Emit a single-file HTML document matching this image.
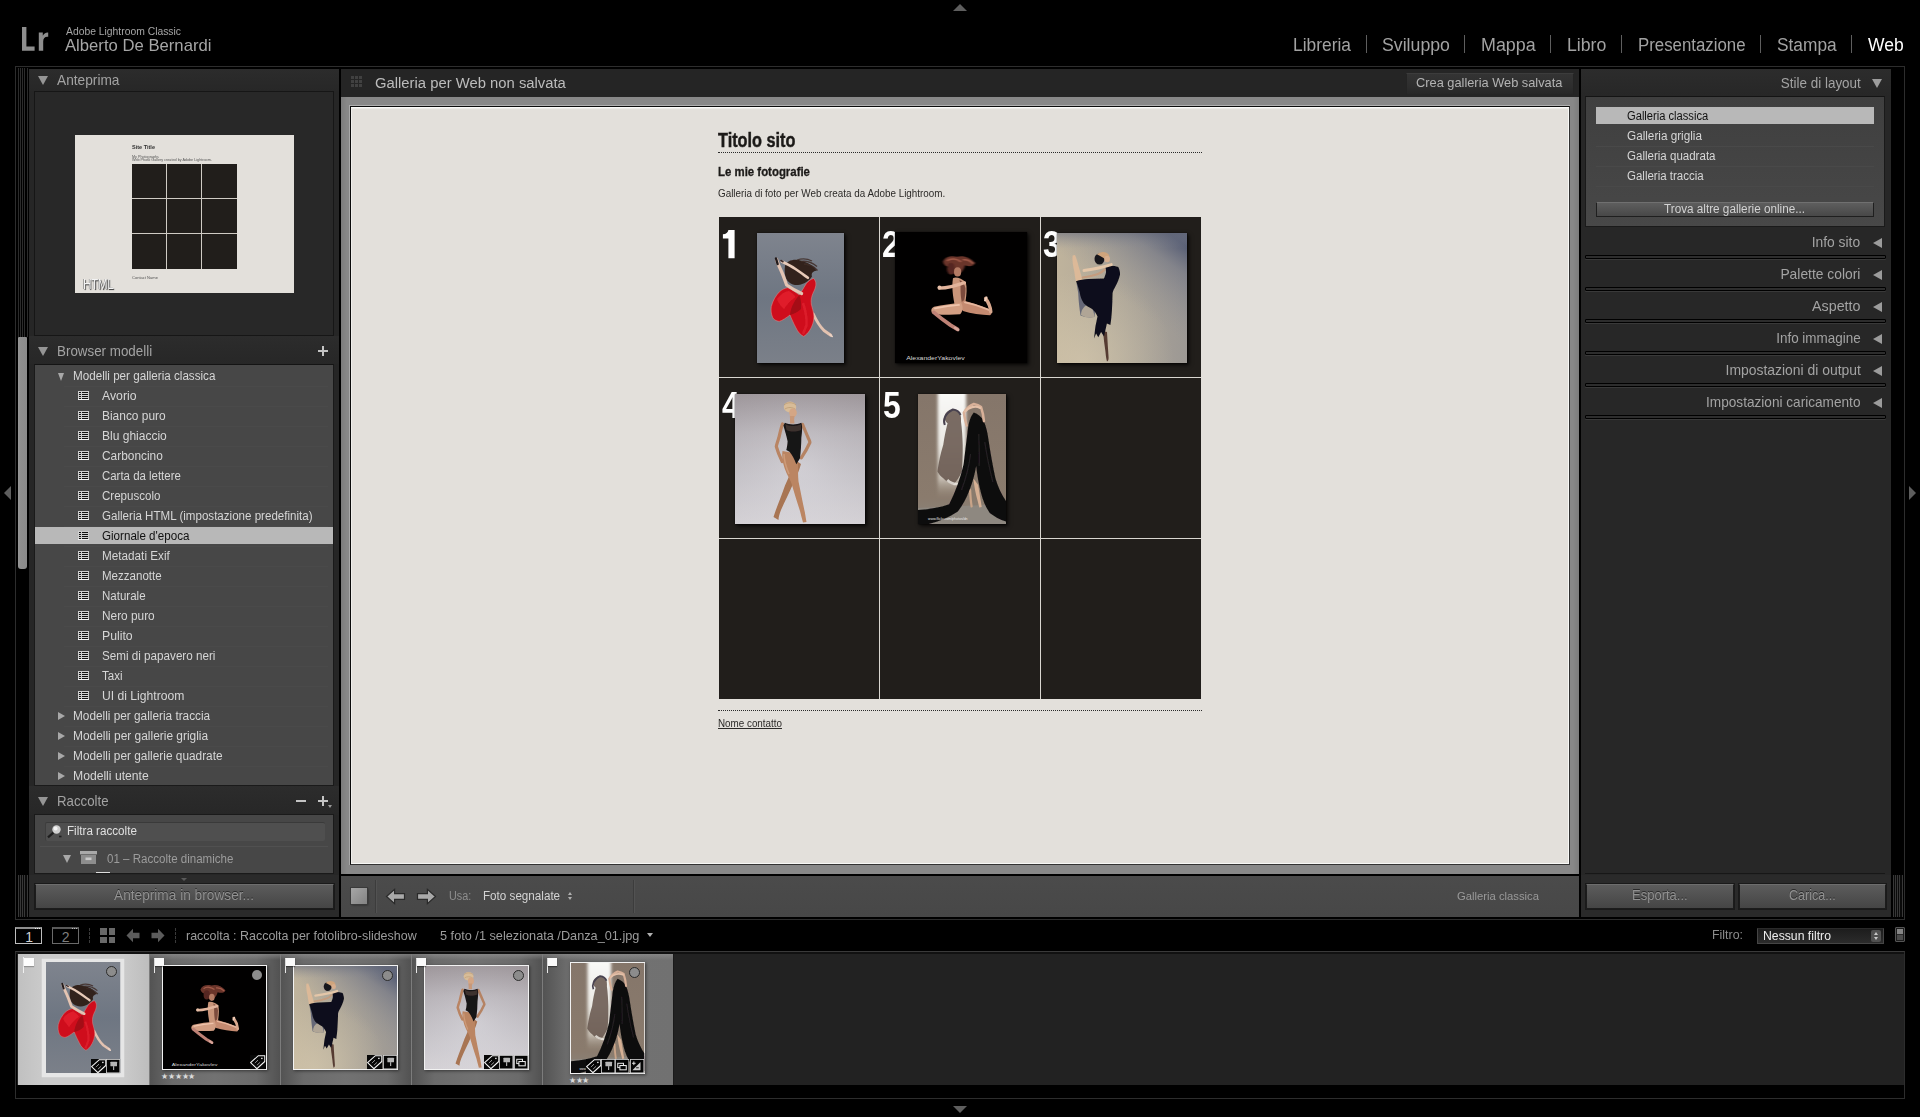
<!DOCTYPE html>
<html>
<head>
<meta charset="utf-8">
<title>Lightroom Classic - Web</title>
<style>
*{box-sizing:border-box;margin:0;padding:0}
html,body{width:1920px;height:1117px;overflow:hidden;background:#000}
body{position:relative;font-family:"Liberation Sans",sans-serif;color:#c8c8c8;font-size:12px}
.a{position:absolute}
.t{position:absolute;white-space:nowrap;line-height:1;transform-origin:0 50%}
.tr{position:absolute;white-space:nowrap;line-height:1;transform-origin:100% 50%;text-align:right}
.td{position:absolute;width:0;height:0;border-style:solid;border-color:transparent}
.row{position:absolute;left:0;width:300px;height:20px}
.sep{position:absolute;height:1px;background:#4c4c4c}
.ic{position:absolute;width:11px;height:9px}
svg{position:absolute;overflow:visible}
</style>
</head>
<body>
<svg width="0" height="0" style="left:0;top:0">
<defs>
<linearGradient id="g1" x1="0" y1="0" x2="0" y2="1"><stop offset="0" stop-color="#7f848e"/><stop offset=".5" stop-color="#6e7682"/><stop offset="1" stop-color="#7b8089"/></linearGradient>
<linearGradient id="g3" x1="0" y1="0" x2="1" y2="0"><stop offset="0" stop-color="#bfb39c"/><stop offset=".45" stop-color="#b0a899"/><stop offset="1" stop-color="#9c9894"/></linearGradient><radialGradient id="g3c" cx=".2" cy="1" r=".7"><stop offset="0" stop-color="#d8cbb0" stop-opacity=".6"/><stop offset="1" stop-color="#dccfb2" stop-opacity="0"/></radialGradient>
<linearGradient id="g3b" x1=".85" y1="0" x2=".5" y2=".5"><stop offset="0" stop-color="#4e5670" stop-opacity=".9"/><stop offset=".3" stop-color="#666c80" stop-opacity=".5"/><stop offset="1" stop-color="#8a8c94" stop-opacity="0"/></linearGradient><linearGradient id="g3d" x1="0" y1="0" x2="0" y2="1"><stop offset="0" stop-color="#6a6e7c" stop-opacity=".55"/><stop offset=".12" stop-color="#8a8c94" stop-opacity="0"/><stop offset="1" stop-color="#8a8c94" stop-opacity="0"/></linearGradient>
<linearGradient id="g4" x1="0" y1="0" x2="0" y2="1"><stop offset="0" stop-color="#a29b9f"/><stop offset=".3" stop-color="#c0bcc1"/><stop offset=".65" stop-color="#d1cfd4"/><stop offset="1" stop-color="#e5e3e7"/></linearGradient>
<radialGradient id="g4b" cx=".5" cy=".55" r=".7"><stop offset="0" stop-color="#d8d6dc" stop-opacity=".3"/><stop offset="1" stop-color="#8e878c" stop-opacity=".2"/></radialGradient>
<linearGradient id="g5l" x1="0" y1="0" x2="0" y2="1"><stop offset="0" stop-color="#fafaf8" stop-opacity="1"/><stop offset=".5" stop-color="#eeede8" stop-opacity=".97"/><stop offset=".82" stop-color="#d6d0c6" stop-opacity=".8"/><stop offset="1" stop-color="#a09484" stop-opacity="0"/></linearGradient>
<linearGradient id="g5" x1="0" y1="0" x2="0" y2="1"><stop offset="0" stop-color="#85766a"/><stop offset=".8" stop-color="#8a7b6d"/><stop offset="1" stop-color="#8a847c"/></linearGradient>
<filter id="bl1" x="-20%" y="-20%" width="140%" height="140%"><feGaussianBlur stdDeviation="0.8"/></filter>
<filter id="bl2" x="-20%" y="-20%" width="140%" height="140%"><feGaussianBlur stdDeviation="1.6"/></filter>
<filter id="bl05" x="-20%" y="-20%" width="140%" height="140%"><feGaussianBlur stdDeviation="0.65"/></filter>
</defs>
<symbol id="p1" viewBox="0 0 87 130" preserveAspectRatio="none">
<rect width="87" height="130" fill="url(#g1)"/>
<g filter="url(#bl05)">
<path d="M28 33C30 27 38 25.500 45 28C51 29.500 57 33 59.500 37.500C56 38.500 54 40 55 43.500C52 48 47 51.500 41 52C35 52.500 30 49 28.500 44C27.500 40 27.500 36 28 33Z" fill="#33241f"/>
<path d="M44 28.500C50 27.500 55 29.500 60 33.500M47 31C52 31 57 33.500 60.500 37.500M40 27C46 25 51 26 55 28" stroke="#3e2c26" stroke-width="1.300" fill="none" opacity=".85"/>
<path d="M56.300 81C59 87 62.500 93 67 97.500L73.800 102.300" stroke="#e3c2b0" stroke-width="2.900" fill="none" stroke-linecap="round" stroke-linejoin="round"/>
<path d="M73 101.500l2.200 2" stroke="#ecd4c6" stroke-width="1.600" stroke-linecap="round"/>
<path d="M56.600 45.400C60 49 59 53 57.500 57C55 62 53.500 66 54.500 72C56 78 57.800 82 56.500 88C55 95 51 101 46.600 103.400C43 101.500 41 99 39 95C36.500 90 34.500 86 33 82C29 85 25.500 87.500 22.200 88.400C19 88 16.500 86.500 15.800 84.800C14 81 13.800 77 14.300 73.400C16 67 19 62.500 22.200 59C25 56.500 28 55 30.800 54.700C35 56.500 39 59.500 42.300 61.900C45 58 47 54 49.400 50.400C51.500 48 54 46 56.600 45.400Z" fill="#cf0f1e" stroke="#e68a86" stroke-width=".5"/>
<path d="M33 82C33.500 76 36 69 42.300 61.900C44 66 44.500 71 44 76C41 79 37 81 33 82Z" fill="#9e0814" opacity=".9"/>
<path d="M20 66C24 61 28 58.500 32 58C35 60 37 62 38.500 64C34 67 30 71 27 76C24 73 21.500 70 20 66Z" fill="#e62330" opacity=".75"/>
<path d="M46 70C48 76 50 84 49.500 92C48 96 47 99 46 101" stroke="#e82836" stroke-width="2.400" fill="none" opacity=".55"/>
<path d="M19.500 26.500C20.500 30 22.500 34 24.500 38.500C26.500 43 28 47.500 29.600 52C34 55 39 58 44.600 60.500" stroke="#e4c4b2" stroke-width="3.200" fill="none" stroke-linecap="round" stroke-linejoin="round"/>
<path d="M24.800 28.500C29 30.500 34 33 38.500 36C43 39 47 42 50.900 44.800" stroke="#e8cab8" stroke-width="2.600" fill="none" stroke-linecap="round"/>
<path d="M19 25.500l1.600 5.500" stroke="#241a1e" stroke-width="2.400" stroke-linecap="round"/>
<path d="M24 27.500l2 1.200" stroke="#3a2a2a" stroke-width="1.600" stroke-linecap="round"/>
</g>
</symbol>
<symbol id="p2" viewBox="0 0 132 132" preserveAspectRatio="none">
<rect width="132" height="132" fill="#010000"/>
<g filter="url(#bl1)">
<path d="M48 30C50 25 56 23.500 62 25C68 23 75 25.500 80 31C79 35 74 35 70 33.500C69 38 66 42 62 42.500C57 42 55 39 54.500 35.500C51 35 48.500 33 48 30Z" fill="#6a342b"/>
<path d="M52 29C56 26 62 27 66 30M68 28C72 27.500 76 29.500 78.500 32" stroke="#a35c4a" stroke-width="1.600" fill="none"/>
<ellipse cx="56" cy="37" rx="4" ry="6" fill="#552820"/>
</g>
<g filter="url(#bl05)">
<ellipse cx="62.600" cy="40.200" rx="3.600" ry="4.600" fill="#b37a64"/>
<path d="M58 46.500C61 45 66.500 46.500 70.800 50.600C72.200 56 71.600 63 70.600 69.500C72 73 71 77 67 79C62 80 59.500 76 59.200 71C58 64 56.500 55 58 46.500Z" fill="#c9957a"/>
<path d="M64.500 48C68 50 70 53 70.500 57C70.500 63 69.500 69 68 74C66 70 65.500 62 65.500 56C65.500 53 65 50 64.500 48Z" fill="#6e4032" opacity=".85"/>
<path d="M69.500 51.200C65 52.500 60.500 54 56.300 55C52 56 48 56.500 44.300 56.600" stroke="#e2b49c" stroke-width="3.200" fill="none" stroke-linecap="round"/>
<circle cx="44.500" cy="56" r="2" fill="#e8c0a8"/>
<path d="M68 69C75 70.500 85 74 93.600 77.500C97 79.500 97 83 95 83.800C86 83.500 76 82 68 79.500C65.500 76 66 71.500 68 69Z" fill="#c48a70"/>
<path d="M70 71C78 72.500 87 75.500 94 78.500" stroke="#e6b79e" stroke-width="1.800" fill="none" stroke-linecap="round"/>
<path d="M95.800 80.500C95.500 76 93.500 71 90.600 66.800" stroke="#d9a88e" stroke-width="3.400" fill="none" stroke-linecap="round"/>
<path d="M91.500 66l-1.500 3" stroke="#f0d0bc" stroke-width="2" stroke-linecap="round"/>
<path d="M66 71.500C57 72 47 73.500 39 75.300C35.500 77 35.500 81 38.500 82.500C47 83.500 57 83.500 65 83C68 80 68.500 75 66 71.500Z" fill="#d29e83"/>
<path d="M64 73.500C56 74 47 75.500 40 77" stroke="#efc4ac" stroke-width="1.800" fill="none" stroke-linecap="round"/>
<path d="M38.800 81C44 85.500 50 90 55.500 93.800L62.600 98" stroke="#bf8276" stroke-width="3.800" fill="none" stroke-linecap="round" stroke-linejoin="round"/>
<path d="M60 96.500l3.200 2.200" stroke="#d8a79c" stroke-width="2.400" stroke-linecap="round"/>
</g>
<text x="11.200" y="128.600" font-family="Liberation Sans, sans-serif" font-size="5.400" fill="#d8d8d8" textLength="58.500" lengthAdjust="spacingAndGlyphs">AlexanderYakovlev</text>
</symbol>
<symbol id="p3" viewBox="0 0 130 130" preserveAspectRatio="none">
<rect width="130" height="130" fill="url(#g3)"/>
<rect width="130" height="130" fill="url(#g3c)"/>
<rect width="130" height="130" fill="url(#g3b)"/><rect width="130" height="130" fill="url(#g3d)"/>
<g filter="url(#bl05)">
<path d="M19.500 50C25 55 31 60 36 64.500C38 71 38.500 78 37.500 84C33 85 28 84.500 23.500 82.500C22.500 76 21.500 68 21.200 60Z" fill="#565b70" opacity=".85"/>
<path d="M24 82C24 78 26 74 30 72C34 72 36.500 76 37.500 84C33 85 27.500 84.500 24 82Z" fill="#bdb29c" opacity=".85"/>
<path d="M15.600 22.500C15 27 16 33 17.200 38C17.800 42 18.200 45 19 48.500L25.500 47.600C24.500 43 23 38 21.500 33C20.500 29 19.500 25 18 22Z" fill="#dcb998"/>
<path d="M46 98C46.500 105 47.500 112 48.500 119C48.800 123 49.300 126 50 128.500C51.500 128 51.800 126 51.500 123C51 116 50.500 108 50 99Z" fill="#553b32"/>
<path d="M48.400 33.500C52 32.500 57 32.600 61.300 34C62.500 36.500 63.200 39 63 41.800C62 46 60.500 49.500 58.500 53.300C57 56 56 58 55.600 60C55.500 66 55.200 72 54.900 77.700C54.600 83 54 88 53.400 92L49.900 90.500L47 103.400L44.100 99.100L41.300 104.200L39.100 100.600L37 105.600L38.400 93.400L40.500 83.400C39 80 37.500 78 35.500 76.200C32 74.500 29 72.500 26.900 70.500C24.500 67 23.200 63 22.600 59L20.500 51.900L19 48.300C23 47 27 46.400 31.200 46.100L47 45.400C48 43 48.800 41 49.100 39Z" fill="#11111b"/>
<path d="M27 37.500C32 36.800 37 36 41.500 35C46 34 50.500 32.800 54.300 31.600" stroke="#e4c6a8" stroke-width="2.900" fill="none" stroke-linecap="round"/>
<path d="M25.800 44.500C30 44 35 43 39.500 41.500C43 40.300 46 38.500 47.500 36.500" stroke="#c59c7e" stroke-width="2.200" fill="none" stroke-linecap="round"/>
<ellipse cx="42.500" cy="26" rx="5" ry="5.500" fill="#17141d"/>
<path d="M40 21.500C43 18 49.500 18 52 22C52.500 24 51 26 48.500 26.500C46 24.500 43 22.500 40 21.500Z" fill="#cfa47c"/>
<ellipse cx="50.200" cy="26" rx="2.800" ry="3.200" fill="#d7ae8e"/>
</g>
</symbol>
<symbol id="p4" viewBox="0 0 130 130" preserveAspectRatio="none">
<rect width="130" height="130" fill="url(#g4)"/>
<rect width="130" height="130" fill="url(#g4b)"/>
<g filter="url(#bl05)">
<ellipse cx="55" cy="13" rx="6.200" ry="5.400" fill="#d8bc98"/>
<path d="M49 11C52 8 58 8 61 11M50 15C53 13 57 13 60 15" stroke="#b89870" stroke-width="1" fill="none" opacity=".7"/>
<ellipse cx="58" cy="18.800" rx="3.800" ry="4.600" fill="#d4a685"/>
<path d="M54.800 22C55 25 55.200 27 55 29.500L59.500 29.500C59 27 59 24.500 59.500 22Z" fill="#c89878"/>
<path d="M47.500 30C46 34 45 39 43.800 44C42.500 48 41.600 50.500 41.300 52.500C42.500 57 44.500 62 47.200 67.500" stroke="#b98463" stroke-width="3.200" fill="none" stroke-linecap="round" stroke-linejoin="round"/>
<path d="M67.500 30.500C69.500 35 71.500 40 73.500 44.500C74.500 46.500 75 47.500 74.900 48.500C72.500 54 69.500 59 66.300 63.800" stroke="#b58364" stroke-width="3.200" fill="none" stroke-linecap="round" stroke-linejoin="round"/>
<path d="M60 66C57.500 75 53.500 84 50 91.500C47 100 43.500 109 40.500 117L38.500 123L43.500 126C43.500 123 44.500 120 46 116C50 107 54.500 98 58 90C61 84 64 77 66 70Z" fill="#a87453"/>
<path d="M47.500 57C46.500 63 48 71 51.500 79C54 84 55.800 87 56.500 89.500C59 98 62 108 65 117L66.500 123L68 128.500L71.500 128C71 125 70.500 122 69.800 118C67.500 108 65.500 97 63.500 87.500C63 82 63 76 63 70.500L57 58.700Z" fill="#bb8562"/><path d="M49 60C49 66 51 73 54 80" stroke="#d4a483" stroke-width="1.600" fill="none" opacity=".7"/>
<path d="M49.900 28.700C54.500 31 61.500 31 66.300 28.700C67.200 31 67.200 34 67 37C66.800 40 66.500 42.500 66.300 44.400C66.200 51 65.800 58 64.900 64.500L61.300 70.200C59.500 65.500 57.500 61 54.500 57.800L51.300 56C52 53.500 52.500 50.500 52.600 47.300C51.500 42 50 37 48.400 31.500Z" fill="#181315"/>
<path d="M50.300 30.200C55 32.500 61 32.500 66 30.200L66.200 36C61 38 55.500 38 51.500 36Z" fill="#3d302e"/>
</g>
</symbol>
<symbol id="p5" viewBox="0 0 87 130" preserveAspectRatio="none">
<rect width="87" height="130" fill="url(#g5)"/>
<path d="M0 114L87 110L87 130L0 130Z" fill="#8e8880"/>
<rect x="19.500" y="-4" width="28" height="108" fill="url(#g5l)" filter="url(#bl2)"/>
<g filter="url(#bl05)">
<path d="M29.200 29.200C27.500 28 26.800 26.500 26.700 25.800C25.500 23 26.500 20 28.300 18.300C30.500 16 33 15.500 35 15.800C38 16 40.500 17.500 41.700 19.200C42.500 22 42.700 25 42.500 27.500C43.500 35 44 43 44.200 50.800C44.300 60 44 69 43.300 77.500C41 83 38 87.500 35 90.800C31 89.500 27.500 87 25 84.200C22.500 82.500 20.500 80 19.200 77.500C20.500 68 22.500 59 25 50.800C26 43 27.500 36 29.200 29.200Z" fill="#65564d" opacity=".86"/>
<path d="M26.500 31C24.500 26 26.500 19.500 34.500 15.500C38 16 41 18 42 21" stroke="#4a4350" stroke-width="2" fill="none"/>
<path d="M29 86C32 89 36 90.500 40 90" stroke="#f0ece6" stroke-width="2.500" fill="none" opacity=".8"/>
</g>
<g filter="url(#bl05)">
<path d="M54.800 84.500C55.500 92 57 100 59 107L60.600 113.500L63 113C62 106 60.500 98 59.500 91Z" fill="#d6b094"/>
<path d="M51.500 96C51.800 102 52.300 108 53 112.500" stroke="#c9a488" stroke-width="2.200" fill="none" stroke-linecap="round"/>
<path d="M55.200 18.600C59 20 63 23 65.200 27.200C67.500 33 68.800 39 69.500 44.400C71.500 58 74 72 76.600 84.500C79 93 83 101 87 107L87 127.500C81 125.500 75.500 122.500 70.900 118.900C67 113 64 106 62.300 98.900C60 90 58.500 81 57.500 72C56 81 53.800 89 50.900 96C48 104 44 111.500 39.400 117.500C31 123 21 127.500 10.700 130L0 130L0 116C11 115.500 22 113.500 30.800 110.300C37 98 42 84 45.100 70.200C46.500 58 48 46 49.400 34.400C50.500 27 52.500 21.500 55.200 18.600Z" fill="#0e0c0e"/>
<path d="M60 40C60.500 52 61 62 60.500 72M66 48C68 62 71 76 74 88M52 60C50.500 72 47.500 84 43 96" stroke="#2a2628" stroke-width="1.200" fill="none" opacity=".8"/>
<path d="M48 31.500C46.800 27 45.800 22.500 45.300 18.600C48 14.500 51.500 11.500 55.200 10C58 10.500 60.500 11.500 62.300 12.900C63.800 17.500 64.800 22.500 65.200 27.200" stroke="#d8b098" stroke-width="2.500" fill="none" stroke-linecap="round" stroke-linejoin="round"/>
<path d="M46.500 17.500C50 13 57 11.500 61.500 14" stroke="#e4c0a8" stroke-width="2.100" fill="none" stroke-linecap="round"/>
</g>
<text x="10" y="126" font-family="Liberation Sans, sans-serif" font-size="3.200" fill="#e8e8e8" textLength="39" lengthAdjust="spacingAndGlyphs">www.flickr.com/photos/dn</text>
</symbol>
<symbol id="b_tag" viewBox="0 0 14 14" preserveAspectRatio="none"><rect width="14" height="14" fill="#080808"/><path d="M0.500 7.500L7.500 0.700H13.300V6.300L6.200 13.400Z" fill="#050505" stroke="#f4f4f4" stroke-width="1"/><path d="M4.400 7.900L7.500 4.700M6.200 10L9.500 6.700" stroke="#e8e8e8" stroke-width=".8" stroke-dasharray="1 .5" fill="none"/><rect x="10" y="2.700" width="1.300" height="1.300" fill="#f0f0f0"/></symbol>
<symbol id="b_kw" viewBox="0 0 14 14"><rect width="14" height="14" fill="#050505"/><rect x=".4" y=".4" width="13.200" height="13.200" fill="none" stroke="#d6d6d6" stroke-width=".8"/><rect x="4.300" y="2.600" width="6.500" height="4.500" rx=".6" fill="#b6b6b6"/><rect x="7" y="7" width="1" height="3.800" fill="#c8c8c8"/></symbol>
<symbol id="b_coll" viewBox="0 0 14 14"><rect width="14" height="14" fill="#050505"/><rect x=".4" y=".4" width="13.200" height="13.200" fill="none" stroke="#d6d6d6" stroke-width=".8"/><rect x="2.700" y="4.200" width="5.600" height="4.200" fill="none" stroke="#e8e8e8" stroke-width="1"/><rect x="4.800" y="6.400" width="6.200" height="4.200" fill="#050505" stroke="#f0f0f0" stroke-width="1"/></symbol>
<symbol id="b_dev" viewBox="0 0 14 14"><rect width="14" height="14" fill="#050505"/><rect x=".4" y=".4" width="13.200" height="13.200" fill="none" stroke="#d6d6d6" stroke-width=".8"/><path d="M2.300 10.900L10.300 2.900V10.900Z" fill="#cdcdcd"/><path d="M2 4.200H5.500M3.750 2.400V6" stroke="#f0f0f0" stroke-width=".9"/><path d="M6 8.600H8.600" stroke="#050505" stroke-width=".9"/></symbol>
</svg>
<div class="td" style="left:953px;top:3.500px;border-width:0 7.500px 7.500px 7.500px;border-bottom-color:#5e5e5e"></div>
<div class="td" style="left:952.500px;top:1106px;border-width:7.500px 7.500px 0 7.500px;border-top-color:#5e5e5e"></div>
<div class="td" style="left:3.800px;top:485.500px;border-width:7.200px 7.500px 7.200px 0;border-right-color:#5e5e5e"></div>
<div class="td" style="left:1908.700px;top:485.800px;border-width:7.200px 0 7.200px 7.500px;border-left-color:#5e5e5e"></div>
<svg style="left:22px;top:27px" width="27" height="24" viewBox="0 0 27 24"><path d="M0 0h4.4v19.4h8.2v4.4H0zM16.8 5.6h4v3.2c1-2.2 2.8-3.6 5.4-3.4v4.4c-3.2-.4-5 1.400-5 4.600v9.400h-4.400z" fill="#8e8e8e"/></svg>
<div class="t" style="top:25.97px;font-size:11.5px;color:#a6a6a6;left:65.50px;transform:scaleX(0.8995);">Adobe Lightroom Classic</div>
<div class="t" style="top:38.05px;font-size:16.6px;color:#a6a6a6;left:64.80px;transform:scaleX(1.0049);">Alberto De Bernardi</div>
<div class="t" style="top:36.09px;font-size:18.8px;color:#a2a2a2;left:1292.70px;transform:scaleX(0.9251);">Libreria</div>
<div class="t" style="top:36.09px;font-size:18.8px;color:#a2a2a2;left:1382.00px;transform:scaleX(0.9429);">Sviluppo</div>
<div class="t" style="top:36.09px;font-size:18.8px;color:#a2a2a2;left:1481.00px;transform:scaleX(0.9516);">Mappa</div>
<div class="t" style="top:36.09px;font-size:18.8px;color:#a2a2a2;left:1567.30px;transform:scaleX(0.9425);">Libro</div>
<div class="t" style="top:36.09px;font-size:18.8px;color:#a2a2a2;left:1638.00px;transform:scaleX(0.8961);">Presentazione</div>
<div class="t" style="top:36.09px;font-size:18.8px;color:#a2a2a2;left:1777.00px;transform:scaleX(0.9214);">Stampa</div>
<div class="t" style="top:36.09px;font-size:18.8px;color:#ffffff;left:1868.00px;transform:scaleX(0.9317);">Web</div>
<div class="a" style="left:1366px;top:35px;width:1px;height:18px;background:#5e5e5e"></div>
<div class="a" style="left:1464px;top:35px;width:1px;height:18px;background:#5e5e5e"></div>
<div class="a" style="left:1550px;top:35px;width:1px;height:18px;background:#5e5e5e"></div>
<div class="a" style="left:1621px;top:35px;width:1px;height:18px;background:#5e5e5e"></div>
<div class="a" style="left:1760px;top:35px;width:1px;height:18px;background:#5e5e5e"></div>
<div class="a" style="left:1851px;top:35px;width:1px;height:18px;background:#5e5e5e"></div>
<div class="a" style="left:15px;top:66px;width:1890px;height:854px;border:1px solid #2d2d2d"></div>
<div class="a" style="left:18px;top:68px;width:10px;height:269px;background:repeating-linear-gradient(90deg,#2c2c2c 0,#2c2c2c 1px,#000 1px,#000 2.150px)"></div>
<div class="a" style="left:29px;top:69px;width:310px;height:848px;background:#262626"></div>
<div class="a" style="left:18px;top:337px;width:9px;height:231.500px;border-radius:1px 1px 3px 3px;background:linear-gradient(90deg,#979797,#8e8e8e 30%,#8a8a8a)"></div>
<div class="a" style="left:18px;top:875px;width:10px;height:42px;background:repeating-linear-gradient(90deg,#383838 0,#383838 1px,#0a0a0a 1px,#0a0a0a 2.150px)"></div>
<div class="a" style="left:29px;top:69px;width:310px;height:22px;background:linear-gradient(#2c2c2c,#272727)"></div>
<div class="td" style="left:37.5px;top:75.5px;border-width:9.5px 5px 0 5px;border-top-color:#959595"></div>
<div class="t" style="top:72.74px;font-size:14.6px;color:#a3a3a3;left:57.30px;transform:scaleX(0.9393);">Anteprima</div>
<div class="a" style="left:34px;top:91px;width:300px;height:245px;background:#282828;border:1px solid #161616"></div>
<div class="a" style="left:75px;top:135px;width:219px;height:158px;background:#e3e0db"></div>
<div class="a" style="left:132px;top:164px;width:105px;height:105px;background:#211e1b"></div>
<div class="a" style="left:165.5px;top:164px;width:1px;height:105px;background:#cfcbc4"></div>
<div class="a" style="left:200.5px;top:164px;width:1px;height:105px;background:#cfcbc4"></div>
<div class="a" style="left:132px;top:198px;width:105px;height:1px;background:#cfcbc4"></div>
<div class="a" style="left:132px;top:233px;width:105px;height:1px;background:#cfcbc4"></div>
<div class="t" style="top:144.05px;font-size:6.2px;color:#333;font-weight:bold;left:132.00px;transform:scaleX(0.8940);">Site Title</div>
<div class="t" style="top:154.74px;font-size:4.2px;color:#555;left:132.00px;transform:scaleX(0.8828);">My Photographs</div>
<div class="t" style="top:158.24px;font-size:4.2px;color:#555;left:132.00px;transform:scaleX(0.8885);">Web Photo Gallery created by Adobe Lightroom.</div>
<div class="t" style="top:275.58px;font-size:4.4px;color:#555;left:132.00px;transform:scaleX(0.9245);">Contact Name</div>
<div class="t" style="top:277.33px;font-size:14.5px;color:#f4f4f4;left:83.00px;transform:scaleX(0.8107);text-shadow:1px 1px 1px #333,-0.5px -0.5px 0 #666;letter-spacing:-0.5px;">HTML</div>
<div class="a" style="left:29px;top:336px;width:310px;height:28px;background:linear-gradient(#2c2c2c,#272727)"></div>
<div class="td" style="left:37.5px;top:346.5px;border-width:9.5px 5px 0 5px;border-top-color:#959595"></div>
<div class="t" style="top:343.74px;font-size:14.6px;color:#a3a3a3;left:57.30px;transform:scaleX(0.9167);">Browser modelli</div>
<div class="a" style="left:318px;top:350px;width:10px;height:2px;background:#c4c4c4"></div><div class="a" style="left:322px;top:346px;width:2px;height:10px;background:#c4c4c4"></div>
<div class="a" style="left:34px;top:364px;width:300px;height:422px;background:#474747;border:1px solid #1a1a1a;border-top-color:#141414"></div>
<div class="td" style="left:58px;top:372.5px;border-width:8px 3.8px 0 3.8px;border-top-color:#a8a8a8"></div>
<div class="t" style="top:369.84px;font-size:12px;color:#d6d6d6;left:73.40px;transform:scaleX(0.9705);">Modelli per galleria classica</div>
<div class="a" style="left:64px;top:386px;width:264px;height:1px;background:#4a4a4a"></div>
<svg style="left:78px;top:391px" width="11" height="10" viewBox="0 0 11 10" shape-rendering="crispEdges"><rect x="0" y="0" width="11" height="9" fill="#121212"/><path d="M0 .5h11M0 2.500h11M0 4.500h11M0 6.500h11M.5 0v9M10.500 0v9M3.500 0v9" stroke="#cfcfcf" stroke-width="1" fill="none"/><path d="M0 8.500h11" stroke="#f4f4f4" stroke-width="1"/></svg>
<div class="t" style="top:389.84px;font-size:12px;color:#d6d6d6;left:102.30px;transform:scaleX(1.0208);">Avorio</div>
<div class="a" style="left:64px;top:406px;width:264px;height:1px;background:#4a4a4a"></div>
<svg style="left:78px;top:411px" width="11" height="10" viewBox="0 0 11 10" shape-rendering="crispEdges"><rect x="0" y="0" width="11" height="9" fill="#121212"/><path d="M0 .5h11M0 2.500h11M0 4.500h11M0 6.500h11M.5 0v9M10.500 0v9M3.500 0v9" stroke="#cfcfcf" stroke-width="1" fill="none"/><path d="M0 8.500h11" stroke="#f4f4f4" stroke-width="1"/></svg>
<div class="t" style="top:409.84px;font-size:12px;color:#d6d6d6;left:102.30px;transform:scaleX(0.9946);">Bianco puro</div>
<div class="a" style="left:64px;top:426px;width:264px;height:1px;background:#4a4a4a"></div>
<svg style="left:78px;top:431px" width="11" height="10" viewBox="0 0 11 10" shape-rendering="crispEdges"><rect x="0" y="0" width="11" height="9" fill="#121212"/><path d="M0 .5h11M0 2.500h11M0 4.500h11M0 6.500h11M.5 0v9M10.500 0v9M3.500 0v9" stroke="#cfcfcf" stroke-width="1" fill="none"/><path d="M0 8.500h11" stroke="#f4f4f4" stroke-width="1"/></svg>
<div class="t" style="top:429.84px;font-size:12px;color:#d6d6d6;left:102.30px;transform:scaleX(1.0015);">Blu ghiaccio</div>
<div class="a" style="left:64px;top:446px;width:264px;height:1px;background:#4a4a4a"></div>
<svg style="left:78px;top:451px" width="11" height="10" viewBox="0 0 11 10" shape-rendering="crispEdges"><rect x="0" y="0" width="11" height="9" fill="#121212"/><path d="M0 .5h11M0 2.500h11M0 4.500h11M0 6.500h11M.5 0v9M10.500 0v9M3.500 0v9" stroke="#cfcfcf" stroke-width="1" fill="none"/><path d="M0 8.500h11" stroke="#f4f4f4" stroke-width="1"/></svg>
<div class="t" style="top:449.84px;font-size:12px;color:#d6d6d6;left:102.30px;transform:scaleX(0.9907);">Carboncino</div>
<div class="a" style="left:64px;top:466px;width:264px;height:1px;background:#4a4a4a"></div>
<svg style="left:78px;top:471px" width="11" height="10" viewBox="0 0 11 10" shape-rendering="crispEdges"><rect x="0" y="0" width="11" height="9" fill="#121212"/><path d="M0 .5h11M0 2.500h11M0 4.500h11M0 6.500h11M.5 0v9M10.500 0v9M3.500 0v9" stroke="#cfcfcf" stroke-width="1" fill="none"/><path d="M0 8.500h11" stroke="#f4f4f4" stroke-width="1"/></svg>
<div class="t" style="top:469.84px;font-size:12px;color:#d6d6d6;left:102.30px;transform:scaleX(0.9527);">Carta da lettere</div>
<div class="a" style="left:64px;top:486px;width:264px;height:1px;background:#4a4a4a"></div>
<svg style="left:78px;top:491px" width="11" height="10" viewBox="0 0 11 10" shape-rendering="crispEdges"><rect x="0" y="0" width="11" height="9" fill="#121212"/><path d="M0 .5h11M0 2.500h11M0 4.500h11M0 6.500h11M.5 0v9M10.500 0v9M3.500 0v9" stroke="#cfcfcf" stroke-width="1" fill="none"/><path d="M0 8.500h11" stroke="#f4f4f4" stroke-width="1"/></svg>
<div class="t" style="top:489.84px;font-size:12px;color:#d6d6d6;left:102.30px;transform:scaleX(0.9621);">Crepuscolo</div>
<div class="a" style="left:64px;top:506px;width:264px;height:1px;background:#4a4a4a"></div>
<svg style="left:78px;top:511px" width="11" height="10" viewBox="0 0 11 10" shape-rendering="crispEdges"><rect x="0" y="0" width="11" height="9" fill="#121212"/><path d="M0 .5h11M0 2.500h11M0 4.500h11M0 6.500h11M.5 0v9M10.500 0v9M3.500 0v9" stroke="#cfcfcf" stroke-width="1" fill="none"/><path d="M0 8.500h11" stroke="#f4f4f4" stroke-width="1"/></svg>
<div class="t" style="top:509.84px;font-size:12px;color:#d6d6d6;left:102.30px;transform:scaleX(0.9647);">Galleria HTML (impostazione predefinita)</div>
<div class="a" style="left:35px;top:527px;width:298px;height:17px;background:#b8b8b8"></div>
<div class="a" style="left:64px;top:526px;width:264px;height:1px;background:#4a4a4a"></div>
<svg style="left:78px;top:531px" width="11" height="10" viewBox="0 0 11 10" shape-rendering="crispEdges"><rect x="0" y="0" width="11" height="9" fill="#121212"/><path d="M0 .5h11M0 2.500h11M0 4.500h11M0 6.500h11M.5 0v9M10.500 0v9M3.500 0v9" stroke="#cfcfcf" stroke-width="1" fill="none"/><path d="M0 8.500h11" stroke="#f4f4f4" stroke-width="1"/></svg>
<div class="t" style="top:529.84px;font-size:12px;color:#111;left:102.30px;transform:scaleX(0.9673);">Giornale d'epoca</div>
<div class="a" style="left:64px;top:546px;width:264px;height:1px;background:#4a4a4a"></div>
<svg style="left:78px;top:551px" width="11" height="10" viewBox="0 0 11 10" shape-rendering="crispEdges"><rect x="0" y="0" width="11" height="9" fill="#121212"/><path d="M0 .5h11M0 2.500h11M0 4.500h11M0 6.500h11M.5 0v9M10.500 0v9M3.500 0v9" stroke="#cfcfcf" stroke-width="1" fill="none"/><path d="M0 8.500h11" stroke="#f4f4f4" stroke-width="1"/></svg>
<div class="t" style="top:549.84px;font-size:12px;color:#d6d6d6;left:102.30px;transform:scaleX(0.9775);">Metadati Exif</div>
<div class="a" style="left:64px;top:566px;width:264px;height:1px;background:#4a4a4a"></div>
<svg style="left:78px;top:571px" width="11" height="10" viewBox="0 0 11 10" shape-rendering="crispEdges"><rect x="0" y="0" width="11" height="9" fill="#121212"/><path d="M0 .5h11M0 2.500h11M0 4.500h11M0 6.500h11M.5 0v9M10.500 0v9M3.500 0v9" stroke="#cfcfcf" stroke-width="1" fill="none"/><path d="M0 8.500h11" stroke="#f4f4f4" stroke-width="1"/></svg>
<div class="t" style="top:569.84px;font-size:12px;color:#d6d6d6;left:102.30px;transform:scaleX(0.9624);">Mezzanotte</div>
<div class="a" style="left:64px;top:586px;width:264px;height:1px;background:#4a4a4a"></div>
<svg style="left:78px;top:591px" width="11" height="10" viewBox="0 0 11 10" shape-rendering="crispEdges"><rect x="0" y="0" width="11" height="9" fill="#121212"/><path d="M0 .5h11M0 2.500h11M0 4.500h11M0 6.500h11M.5 0v9M10.500 0v9M3.500 0v9" stroke="#cfcfcf" stroke-width="1" fill="none"/><path d="M0 8.500h11" stroke="#f4f4f4" stroke-width="1"/></svg>
<div class="t" style="top:589.84px;font-size:12px;color:#d6d6d6;left:102.30px;transform:scaleX(0.9612);">Naturale</div>
<div class="a" style="left:64px;top:606px;width:264px;height:1px;background:#4a4a4a"></div>
<svg style="left:78px;top:611px" width="11" height="10" viewBox="0 0 11 10" shape-rendering="crispEdges"><rect x="0" y="0" width="11" height="9" fill="#121212"/><path d="M0 .5h11M0 2.500h11M0 4.500h11M0 6.500h11M.5 0v9M10.500 0v9M3.500 0v9" stroke="#cfcfcf" stroke-width="1" fill="none"/><path d="M0 8.500h11" stroke="#f4f4f4" stroke-width="1"/></svg>
<div class="t" style="top:609.84px;font-size:12px;color:#d6d6d6;left:102.30px;transform:scaleX(0.9876);">Nero puro</div>
<div class="a" style="left:64px;top:626px;width:264px;height:1px;background:#4a4a4a"></div>
<svg style="left:78px;top:631px" width="11" height="10" viewBox="0 0 11 10" shape-rendering="crispEdges"><rect x="0" y="0" width="11" height="9" fill="#121212"/><path d="M0 .5h11M0 2.500h11M0 4.500h11M0 6.500h11M.5 0v9M10.500 0v9M3.500 0v9" stroke="#cfcfcf" stroke-width="1" fill="none"/><path d="M0 8.500h11" stroke="#f4f4f4" stroke-width="1"/></svg>
<div class="t" style="top:629.84px;font-size:12px;color:#d6d6d6;left:102.30px;transform:scaleX(1.0227);">Pulito</div>
<div class="a" style="left:64px;top:646px;width:264px;height:1px;background:#4a4a4a"></div>
<svg style="left:78px;top:651px" width="11" height="10" viewBox="0 0 11 10" shape-rendering="crispEdges"><rect x="0" y="0" width="11" height="9" fill="#121212"/><path d="M0 .5h11M0 2.500h11M0 4.500h11M0 6.500h11M.5 0v9M10.500 0v9M3.500 0v9" stroke="#cfcfcf" stroke-width="1" fill="none"/><path d="M0 8.500h11" stroke="#f4f4f4" stroke-width="1"/></svg>
<div class="t" style="top:649.84px;font-size:12px;color:#d6d6d6;left:102.30px;transform:scaleX(0.9715);">Semi di papavero neri</div>
<div class="a" style="left:64px;top:666px;width:264px;height:1px;background:#4a4a4a"></div>
<svg style="left:78px;top:671px" width="11" height="10" viewBox="0 0 11 10" shape-rendering="crispEdges"><rect x="0" y="0" width="11" height="9" fill="#121212"/><path d="M0 .5h11M0 2.500h11M0 4.500h11M0 6.500h11M.5 0v9M10.500 0v9M3.500 0v9" stroke="#cfcfcf" stroke-width="1" fill="none"/><path d="M0 8.500h11" stroke="#f4f4f4" stroke-width="1"/></svg>
<div class="t" style="top:669.84px;font-size:12px;color:#d6d6d6;left:102.30px;transform:scaleX(0.9606);">Taxi</div>
<div class="a" style="left:64px;top:686px;width:264px;height:1px;background:#4a4a4a"></div>
<svg style="left:78px;top:691px" width="11" height="10" viewBox="0 0 11 10" shape-rendering="crispEdges"><rect x="0" y="0" width="11" height="9" fill="#121212"/><path d="M0 .5h11M0 2.500h11M0 4.500h11M0 6.500h11M.5 0v9M10.500 0v9M3.500 0v9" stroke="#cfcfcf" stroke-width="1" fill="none"/><path d="M0 8.500h11" stroke="#f4f4f4" stroke-width="1"/></svg>
<div class="t" style="top:689.84px;font-size:12px;color:#d6d6d6;left:102.30px;transform:scaleX(1.0114);">UI di Lightroom</div>
<div class="a" style="left:64px;top:706px;width:264px;height:1px;background:#4a4a4a"></div>
<div class="td" style="left:58px;top:711.7px;border-width:4.300px 0 4.300px 7.500px;border-left-color:#a8a8a8"></div>
<div class="t" style="top:709.84px;font-size:12px;color:#d6d6d6;left:73.40px;transform:scaleX(0.9842);">Modelli per galleria traccia</div>
<div class="a" style="left:64px;top:726px;width:264px;height:1px;background:#4a4a4a"></div>
<div class="td" style="left:58px;top:731.7px;border-width:4.300px 0 4.300px 7.500px;border-left-color:#a8a8a8"></div>
<div class="t" style="top:729.84px;font-size:12px;color:#d6d6d6;left:73.40px;transform:scaleX(0.9929);">Modelli per gallerie griglia</div>
<div class="a" style="left:64px;top:746px;width:264px;height:1px;background:#4a4a4a"></div>
<div class="td" style="left:58px;top:751.7px;border-width:4.300px 0 4.300px 7.500px;border-left-color:#a8a8a8"></div>
<div class="t" style="top:749.84px;font-size:12px;color:#d6d6d6;left:73.40px;transform:scaleX(0.9879);">Modelli per gallerie quadrate</div>
<div class="a" style="left:64px;top:766px;width:264px;height:1px;background:#4a4a4a"></div>
<div class="td" style="left:58px;top:771.7px;border-width:4.300px 0 4.300px 7.500px;border-left-color:#a8a8a8"></div>
<div class="t" style="top:769.84px;font-size:12px;color:#d6d6d6;left:73.40px;transform:scaleX(1.0132);">Modelli utente</div>
<div class="a" style="left:29px;top:786px;width:310px;height:29px;background:linear-gradient(#2c2c2c,#272727)"></div>
<div class="td" style="left:37.5px;top:797.0px;border-width:9.5px 5px 0 5px;border-top-color:#959595"></div>
<div class="t" style="top:794.24px;font-size:14.6px;color:#a3a3a3;left:57.30px;transform:scaleX(0.9084);">Raccolte</div>
<div class="a" style="left:296px;top:800px;width:10px;height:2px;background:#c4c4c4"></div>
<div class="a" style="left:318px;top:800px;width:10px;height:2px;background:#c4c4c4"></div><div class="a" style="left:322px;top:796px;width:2px;height:10px;background:#c4c4c4"></div>
<div class="td" style="left:328px;top:805px;border-width:3px 2px 0 2px;border-top-color:#9a9a9a"></div>
<div class="a" style="left:34px;top:814px;width:300px;height:60px;background:#474747;border:1px solid #1a1a1a"></div>
<div class="a" style="left:45px;top:822px;width:280px;height:19px;background:#4f4f4f;border-top:1px solid #3a3a3a;border-left:1px solid #3e3e3e;border-radius:2px"></div>
<div class="a" style="left:40px;top:846px;width:288px;height:1px;background:#505050"></div>
<svg style="left:47px;top:824px" width="16" height="15" viewBox="0 0 16 15"><circle cx="9.5" cy="5.5" r="4.2" fill="#cfcfcf"/><circle cx="8.6" cy="4.6" r="2" fill="#f4f4f4"/><path d="M6.4 8.6L1 13.4" stroke="#1d1d1d" stroke-width="2.2"/><path d="M12 12.5h2.5" stroke="#1d1d1d" stroke-width="1.6"/></svg>
<div class="t" style="top:825.04px;font-size:12px;color:#e0e0e0;left:67.40px;transform:scaleX(0.9705);">Filtra raccolte</div>
<div class="td" style="left:63px;top:855px;border-width:8px 4px 0 4px;border-top-color:#a8a8a8"></div>
<svg style="left:80px;top:851px" width="17" height="13" viewBox="0 0 17 13"><rect x="0" y="0" width="17" height="3.400" fill="#a9a9a9"/><rect x="1" y="4" width="15" height="9" fill="#8d8d8d"/><rect x="5.5" y="6.5" width="6" height="2.600" fill="#c9c9c9"/></svg>
<div class="t" style="top:852.94px;font-size:12px;color:#9c9c9c;left:106.80px;transform:scaleX(0.9619);">01 – Raccolte dinamiche</div>
<div class="a" style="left:96px;top:872px;width:14px;height:1px;background:#ddd"></div>
<div class="a" style="left:29px;top:875px;width:310px;height:42px;background:#2a2a2a"></div>
<div class="td" style="left:181px;top:878px;border-width:3px 3px 0 3px;border-top-color:#5a5a5a"></div>
<div class="a" style="left:35px;top:884px;width:299px;height:25px;background:linear-gradient(#5c5c5c,#454545);border:1px solid #1c1c1c;border-top-color:#6d6d6d;box-shadow:0 0 0 1px #1a1a1a"></div>
<div class="t" style="top:887.94px;font-size:14.6px;color:#919191;left:114.20px;transform:scaleX(0.9377);text-shadow:0 -1px 0 #2a2a2a;">Anteprima in browser...</div>
<div class="a" style="left:341px;top:69px;width:1238px;height:28px;background:#252525"></div>
<svg style="left:351px;top:76px" width="11" height="11"><rect x="0" y="0" width="3" height="3" fill="#414141"/><rect x="4" y="0" width="3" height="3" fill="#414141"/><rect x="8" y="0" width="3" height="3" fill="#414141"/><rect x="0" y="4" width="3" height="3" fill="#414141"/><rect x="4" y="4" width="3" height="3" fill="#414141"/><rect x="8" y="4" width="3" height="3" fill="#414141"/><rect x="0" y="8" width="3" height="3" fill="#414141"/><rect x="4" y="8" width="3" height="3" fill="#414141"/><rect x="8" y="8" width="3" height="3" fill="#414141"/></svg>
<div class="t" style="top:74.83px;font-size:15.2px;color:#bcbcbc;left:375.30px;transform:scaleX(0.9758);">Galleria per Web non salvata</div>
<div class="a" style="left:1406px;top:73px;width:168px;height:22px;background:linear-gradient(#343434,#2e2e2e 60%,#272727);border:1px solid #242424;border-top-color:#3c3c3c;border-bottom-color:#252525"></div>
<div class="t" style="top:75.86px;font-size:13.4px;color:#b4b4b4;left:1416.30px;transform:scaleX(0.9564);">Crea galleria Web salvata</div>
<div class="a" style="left:341px;top:97px;width:1238px;height:777px;background:linear-gradient(90deg,#7c7c7c,#888 6px,#888 1232px,#7c7c7c)"></div>
<div class="a" style="left:349px;top:105px;width:1221px;height:760px;border-top:1px solid #b0b0b0;border-left:1px solid #a8a8a8"></div>
<div class="a" style="left:350px;top:106px;width:1220px;height:759px;background:#e3e0db;border:1px solid #333;border-top-color:#0c0c0c;border-left-color:#0c0c0c;box-shadow:inset 0 1px 0 #fbfbf9,inset 0 2px 0 #eeece8,inset -1px -1px 0 #f8f8f6,inset 1px 0 0 #f0efec"></div>
<div class="t" style="top:130.71px;font-size:19.6px;color:#1c1a18;font-weight:bold;left:718.30px;transform:scaleX(0.8309);-webkit-text-stroke:0.45px #1c1a18;">Titolo sito</div>
<div class="a" style="left:718px;top:152px;width:484px;height:0;border-top:1px dotted #2a2a2a"></div>
<div class="t" style="top:166.33px;font-size:12.6px;color:#1c1a18;font-weight:bold;left:718.30px;transform:scaleX(0.9063);-webkit-text-stroke:0.3px #1c1a18;">Le mie fotografie</div>
<div class="t" style="top:188.02px;font-size:11.2px;color:#2c2a28;left:718.30px;transform:scaleX(0.8812);">Galleria di foto per Web creata da Adobe Lightroom.</div>
<div class="a" style="left:719px;top:217px;width:482px;height:482px;background:#d9d6d0"></div>
<div class="a" style="left:719px;top:217px;width:160px;height:160px;background:#211e1b"></div>
<div class="a" style="left:880px;top:217px;width:160px;height:160px;background:#211e1b"></div>
<div class="a" style="left:1041px;top:217px;width:160px;height:160px;background:#211e1b"></div>
<div class="a" style="left:719px;top:378px;width:160px;height:160px;background:#211e1b"></div>
<div class="a" style="left:880px;top:378px;width:160px;height:160px;background:#211e1b"></div>
<div class="a" style="left:1041px;top:378px;width:160px;height:160px;background:#211e1b"></div>
<div class="a" style="left:719px;top:539px;width:160px;height:160px;background:#211e1b"></div>
<div class="a" style="left:880px;top:539px;width:160px;height:160px;background:#211e1b"></div>
<div class="a" style="left:1041px;top:539px;width:160px;height:160px;background:#211e1b"></div>
<div class="a" style="left:718px;top:710px;width:484px;height:0;border-top:1px dotted #2a2a2a"></div>
<div class="t" style="top:717.86px;font-size:10.8px;color:#2c2a28;left:718.00px;transform:scaleX(0.9112);text-decoration:underline;">Nome contatto</div>
<svg style="left:0;top:0" width="1" height="1"><path d="M728.400 230h6.200v28.300h-6.200v-19.900h-5.500v-4.100c3.200-.2 5-1.700 5.500-4.300z" fill="#fff"/></svg>
<div class="t" style="top:225.98px;font-size:37px;color:#ffffff;font-weight:bold;left:881.50px;transform:scaleX(0.8600);">2</div>
<div class="t" style="top:225.98px;font-size:37px;color:#ffffff;font-weight:bold;left:1043.30px;transform:scaleX(0.8600);">3</div>
<div class="t" style="top:386.98px;font-size:37px;color:#ffffff;font-weight:bold;left:721.50px;transform:scaleX(0.8600);">4</div>
<div class="t" style="top:386.98px;font-size:37px;color:#ffffff;font-weight:bold;left:882.70px;transform:scaleX(0.8600);">5</div>
<div class="a" style="left:757px;top:233px;width:87px;height:130px;box-shadow:0 0 1.500px 0.500px rgba(0,0,0,.9),2px 2px 4px rgba(0,0,0,.75)"><svg width="87" height="130" style="left:0;top:0"><use href="#p1" width="87" height="130"/></svg></div>
<div class="a" style="left:895px;top:232px;width:132px;height:131px;box-shadow:0 0 1.500px 0.500px rgba(0,0,0,.9),2px 2px 4px rgba(0,0,0,.75)"><svg width="132" height="131" style="left:0;top:0"><use href="#p2" width="132" height="131"/></svg></div>
<div class="a" style="left:1057px;top:233px;width:130px;height:130px;box-shadow:0 0 1.500px 0.500px rgba(0,0,0,.9),2px 2px 4px rgba(0,0,0,.75)"><svg width="130" height="130" style="left:0;top:0"><use href="#p3" width="130" height="130"/></svg></div>
<div class="a" style="left:735px;top:394px;width:130px;height:130px;box-shadow:0 0 1.500px 0.500px rgba(0,0,0,.9),2px 2px 4px rgba(0,0,0,.75)"><svg width="130" height="130" style="left:0;top:0"><use href="#p4" width="130" height="130"/></svg></div>
<div class="a" style="left:918px;top:394px;width:88px;height:130px;box-shadow:0 0 1.500px 0.500px rgba(0,0,0,.9),2px 2px 4px rgba(0,0,0,.75)"><svg width="88" height="130" style="left:0;top:0"><use href="#p5" width="88" height="130"/></svg></div>
<div class="a" style="left:341px;top:876px;width:1238px;height:41px;background:linear-gradient(#4b4b4b,#474747)"></div>
<div class="a" style="left:351px;top:888px;width:16px;height:16px;background:linear-gradient(135deg,#a6a6a6,#838383);box-shadow:0 0 0 1px #3a3a3a,1px 1px 2px #222"></div>
<div class="a" style="left:375px;top:880px;width:1px;height:33px;background:#3c3c3c"></div><div class="a" style="left:376px;top:880px;width:1px;height:33px;background:#525252"></div>
<svg style="left:385.5px;top:888.7px" width="19" height="15" viewBox="0 0 19 15"><path d="M0.5 7.5L8.6 0.4V4.700H18.500V10.300H8.600V14.600Z" fill="#a9a9a9" stroke="#2a2a2a" stroke-width="1.2"/></svg>
<svg style="left:416.8px;top:888.7px" width="19" height="15" viewBox="0 0 19 15"><path d="M18.500 7.500L10.400 0.400V4.700H0.500V10.300H10.400V14.600Z" fill="#a9a9a9" stroke="#2a2a2a" stroke-width="1.2"/></svg>
<div class="t" style="top:889.84px;font-size:12px;color:#8e8e8e;left:449.30px;transform:scaleX(0.8997);">Usa:</div>
<div class="t" style="top:889.84px;font-size:12px;color:#d4d4d4;left:483.20px;transform:scaleX(0.9712);">Foto segnalate</div>
<div class="td" style="left:568px;top:892px;border-width:0 2.500px 3px 2.500px;border-bottom-color:#b0b0b0"></div><div class="td" style="left:568px;top:897px;border-width:3px 2.500px 0 2.500px;border-top-color:#b0b0b0"></div>
<div class="a" style="left:633px;top:880px;width:1px;height:33px;background:#3c3c3c"></div><div class="a" style="left:634px;top:880px;width:1px;height:33px;background:#525252"></div>
<div class="t" style="top:890.18px;font-size:11.6px;color:#9a9a9a;left:1457.00px;transform:scaleX(0.9710);">Galleria classica</div>
<div class="a" style="left:1581px;top:69px;width:310px;height:848px;background:#272727"></div>
<div class="a" style="left:1581px;top:69px;width:310px;height:27px;background:linear-gradient(#2c2c2c,#272727)"></div>
<div class="tr" style="top:76.24px;font-size:14.6px;color:#a3a3a3;right:59.50px;transform:scaleX(0.9213);">Stile di layout</div>
<div class="td" style="left:1871.5px;top:79px;border-width:9.5px 5px 0 5px;border-top-color:#9c9c9c"></div>
<div class="a" style="left:1585px;top:96px;width:300px;height:131px;background:linear-gradient(#3f3f3f,#484848);border:1px solid #1a1a1a;border-top-color:#141414"></div>
<div class="a" style="left:1596px;top:107px;width:278px;height:17px;background:#b8b8b8"></div>
<div class="t" style="top:110.04px;font-size:12px;color:#111;left:1627.00px;transform:scaleX(0.9294);">Galleria classica</div>
<div class="t" style="top:130.04px;font-size:12px;color:#d6d6d6;left:1627.00px;transform:scaleX(0.9778);">Galleria griglia</div>
<div class="a" style="left:1596px;top:146px;width:278px;height:1px;background:#494949"></div>
<div class="t" style="top:150.04px;font-size:12px;color:#d6d6d6;left:1627.00px;transform:scaleX(0.9614);">Galleria quadrata</div>
<div class="a" style="left:1596px;top:166px;width:278px;height:1px;background:#494949"></div>
<div class="t" style="top:170.04px;font-size:12px;color:#d6d6d6;left:1627.00px;transform:scaleX(0.9584);">Galleria traccia</div>
<div class="a" style="left:1596px;top:186px;width:278px;height:1px;background:#494949"></div>
<div class="a" style="left:1596px;top:202px;width:278px;height:15px;background:linear-gradient(#5e5e5e,#484848);border:1px solid #1f1f1f;border-top-color:#707070"></div>
<div class="t" style="top:203.04px;font-size:12px;color:#d2d2d2;left:1664.30px;transform:scaleX(0.9772);">Trova altre gallerie online...</div>
<div class="tr" style="top:234.84px;font-size:14.6px;color:#a3a3a3;right:59.50px;transform:scaleX(0.9486);">Info sito</div>
<div class="td" style="left:1872.500px;top:237.5px;border-width:5px 9.500px 5px 0;border-right-color:#9c9c9c"></div>
<div class="a" style="left:1585px;top:255px;width:301px;height:4px;background:#2d2d2d;border:1px solid #000;border-radius:1px;box-shadow:0 1px 0 #393939"></div>
<div class="tr" style="top:266.84px;font-size:14.6px;color:#a3a3a3;right:59.50px;transform:scaleX(0.9479);">Palette colori</div>
<div class="td" style="left:1872.500px;top:269.5px;border-width:5px 9.500px 5px 0;border-right-color:#9c9c9c"></div>
<div class="a" style="left:1585px;top:287px;width:301px;height:4px;background:#2d2d2d;border:1px solid #000;border-radius:1px;box-shadow:0 1px 0 #393939"></div>
<div class="tr" style="top:298.84px;font-size:14.6px;color:#a3a3a3;right:59.50px;transform:scaleX(0.9796);">Aspetto</div>
<div class="td" style="left:1872.500px;top:301.5px;border-width:5px 9.500px 5px 0;border-right-color:#9c9c9c"></div>
<div class="a" style="left:1585px;top:319px;width:301px;height:4px;background:#2d2d2d;border:1px solid #000;border-radius:1px;box-shadow:0 1px 0 #393939"></div>
<div class="tr" style="top:330.84px;font-size:14.6px;color:#a3a3a3;right:59.50px;transform:scaleX(0.9215);">Info immagine</div>
<div class="td" style="left:1872.500px;top:333.5px;border-width:5px 9.500px 5px 0;border-right-color:#9c9c9c"></div>
<div class="a" style="left:1585px;top:351px;width:301px;height:4px;background:#2d2d2d;border:1px solid #000;border-radius:1px;box-shadow:0 1px 0 #393939"></div>
<div class="tr" style="top:362.84px;font-size:14.6px;color:#a3a3a3;right:59.50px;transform:scaleX(0.9540);">Impostazioni di output</div>
<div class="td" style="left:1872.500px;top:365.5px;border-width:5px 9.500px 5px 0;border-right-color:#9c9c9c"></div>
<div class="a" style="left:1585px;top:383px;width:301px;height:4px;background:#2d2d2d;border:1px solid #000;border-radius:1px;box-shadow:0 1px 0 #393939"></div>
<div class="tr" style="top:394.84px;font-size:14.6px;color:#a3a3a3;right:59.50px;transform:scaleX(0.9333);">Impostazioni caricamento</div>
<div class="td" style="left:1872.500px;top:397.5px;border-width:5px 9.500px 5px 0;border-right-color:#9c9c9c"></div>
<div class="a" style="left:1585px;top:415px;width:301px;height:4px;background:#2d2d2d;border:1px solid #000;border-radius:1px;box-shadow:0 1px 0 #393939"></div>
<div class="a" style="left:1585px;top:873px;width:300px;height:1px;background:#171717"></div>
<div class="a" style="left:1581px;top:875px;width:310px;height:42px;background:#2a2a2a"></div>
<div class="a" style="left:1586px;top:884px;width:148px;height:25px;background:linear-gradient(#5c5c5c,#454545);border:1px solid #1c1c1c;border-top-color:#6d6d6d;box-shadow:0 0 0 1px #1a1a1a"></div>
<div class="t" style="top:887.94px;font-size:14.6px;color:#919191;left:1632.00px;transform:scaleX(0.8914);text-shadow:0 -1px 0 #2a2a2a;">Esporta...</div>
<div class="a" style="left:1739px;top:884px;width:147px;height:25px;background:linear-gradient(#5c5c5c,#454545);border:1px solid #1c1c1c;border-top-color:#6d6d6d;box-shadow:0 0 0 1px #1a1a1a"></div>
<div class="t" style="top:887.94px;font-size:14.6px;color:#919191;left:1788.70px;transform:scaleX(0.8591);text-shadow:0 -1px 0 #2a2a2a;">Carica...</div>
<div class="a" style="left:1891px;top:67px;width:13px;height:852px;background:#000"></div>
<div class="a" style="left:1893px;top:875px;width:10px;height:42px;background:repeating-linear-gradient(90deg,#383838 0,#383838 1px,#0a0a0a 1px,#0a0a0a 2.150px)"></div>
<div class="a" style="left:15px;top:927px;width:27px;height:17px;border:1px solid #bdbdbd;border-top:2px solid #8e8e8e"></div><div class="a" style="left:35px;top:927.500px;width:5px;height:1px;background:repeating-linear-gradient(90deg,#eee 0,#eee 1px,transparent 1px,transparent 2px)"></div>
<div class="t" style="top:929.95px;font-size:14px;color:#d2d2d2;left:25.20px;transform:scaleX(1.0000);">1</div>
<div class="a" style="left:52px;top:927px;width:27px;height:17px;border:1px solid #6a6a6a;border-top:2px solid #585858"></div><div class="a" style="left:72px;top:927.500px;width:5px;height:1px;background:repeating-linear-gradient(90deg,#bbb 0,#bbb 1px,transparent 1px,transparent 2px)"></div>
<div class="t" style="top:929.95px;font-size:14px;color:#7e7e7e;left:61.80px;transform:scaleX(1.0000);">2</div>
<div class="a" style="left:89px;top:928px;width:0;height:15px;border-left:1px dashed #3a3a3a"></div>
<div class="a" style="left:100.0px;top:928.0px;width:6.5px;height:6.5px;background:#696969"></div>
<div class="a" style="left:108.5px;top:928.0px;width:6.5px;height:6.5px;background:#696969"></div>
<div class="a" style="left:100.0px;top:936.5px;width:6.5px;height:6.5px;background:#696969"></div>
<div class="a" style="left:108.5px;top:936.5px;width:6.5px;height:6.5px;background:#696969"></div>
<svg style="left:126px;top:928px" width="14" height="15" viewBox="0 0 14 15"><path d="M0.500 7.500L7 0.800V4.800H13.500V10.200H7V14.200Z" fill="#5c5c5c"/></svg>
<svg style="left:151px;top:928px" width="14" height="15" viewBox="0 0 14 15"><path d="M13.500 7.500L7 0.800V4.800H0.500V10.200H7V14.200Z" fill="#5c5c5c"/></svg>
<div class="a" style="left:175px;top:928px;width:0;height:15px;border-left:1px dashed #3a3a3a"></div>
<div class="t" style="top:929.26px;font-size:13.4px;color:#9c9c9c;left:186.20px;transform:scaleX(0.9306);">raccolta : Raccolta per fotolibro-slideshow</div>
<div class="t" style="top:929.26px;font-size:13.4px;color:#9c9c9c;left:440.00px;transform:scaleX(0.9496);">5 foto /1 selezionata /Danza_01.jpg</div>
<div class="td" style="left:647px;top:933px;border-width:4.5px 3.700px 0 3.700px;border-top-color:#b0b0b0"></div>
<div class="t" style="top:928.83px;font-size:12.6px;color:#8c8c8c;left:1712.20px;transform:scaleX(0.9841);">Filtro:</div>
<div class="a" style="left:1757px;top:928px;width:127px;height:16px;background:linear-gradient(#1d1d1d,#2b2b2b);border:1px solid #454545;border-top-color:#2a2a2a"></div>
<div class="t" style="top:929.63px;font-size:12.6px;color:#ededed;left:1763.20px;transform:scaleX(0.9711);">Nessun filtro</div>
<div class="a" style="left:1871px;top:930px;width:10px;height:12px;background:#505050;border-radius:2px"></div>
<div class="td" style="left:1873.500px;top:932px;border-width:0 2.500px 3px 2.500px;border-bottom-color:#c8c8c8"></div><div class="td" style="left:1873.500px;top:937px;border-width:3px 2.500px 0 2.500px;border-top-color:#c8c8c8"></div>
<div class="a" style="left:1894.5px;top:927px;width:10px;height:15px;background:linear-gradient(#858585 0,#858585 45%,#2a2a2a 45%,#2a2a2a 52%,#4c4c4c 52%);border:1px solid #555;box-shadow:inset 0 0 0 1px #1c1c1c;border-radius:1px"></div>
<div class="a" style="left:15px;top:951px;width:1890px;height:148px;border:1px solid #2d2d2d;border-top-color:#3a3a3a"></div>
<div class="a" style="left:17px;top:952px;width:1887px;height:133px;background:#222"></div>
<div class="a" style="left:16px;top:952px;width:1888px;height:2px;background:#111"></div>
<div class="a" style="left:18px;top:954px;width:131px;height:131px;background:linear-gradient(90deg,#c0c0c0,#cbcbcb 20%,#cbcbcb 80%,#bdbdbd)"></div>
<div class="a" style="left:42px;top:959px;width:82.0px;height:117.5px;background:#e6e6e6;box-shadow:0 0 1px #f4f4f4"></div>
<svg style="left:46px;top:962px" width="74.5" height="111"><use href="#p1" width="74.5" height="111"/></svg>
<div class="a" style="left:22.5px;top:957px;width:1px;height:16px;background:#f0f0f0"></div><div class="a" style="left:23.5px;top:957.5px;width:10px;height:8.5px;background:#fdfdfd;box-shadow:0 1px 1px rgba(0,0,0,.25)"></div>
<div class="a" style="left:105.7px;top:965.5px;width:11px;height:11px;border-radius:6px;background:#8c8c8c;border:1.2px solid #2c2c2c"></div>
<svg style="left:90.6px;top:1058.5px" width="15.6" height="14.3"><use href="#b_tag" width="15.6" height="14.3"/></svg>
<svg style="left:106.2px;top:1058.5px" width="14.3" height="14.3"><use href="#b_kw" width="14.3" height="14.3"/></svg>
<div class="a" style="left:149px;top:954px;width:131px;height:131px;background:linear-gradient(rgba(150,150,150,.55),rgba(120,120,120,0) 6px),linear-gradient(90deg,#525252,#6b6b6b 18%,#727272 50%,#6b6b6b 82%,#525252)"></div>
<div class="a" style="left:149px;top:954px;width:1px;height:131px;background:#7c7c7c"></div>
<div class="a" style="left:162px;top:965px;width:105px;height:105px;background:#f2f2f2;box-shadow:1px 1px 3px rgba(0,0,0,.5)"></div>
<svg style="left:163px;top:966px" width="103" height="103"><use href="#p2" width="103" height="103"/></svg>
<div class="a" style="left:154px;top:958px;width:1px;height:15px;background:#e8e8e8"></div><div class="a" style="left:155px;top:958px;width:9px;height:7.5px;background:#fafafa;box-shadow:0 1px 1px rgba(0,0,0,.4)"></div>
<div class="a" style="left:251.7px;top:970px;width:10px;height:10px;border-radius:5px;background:#8c8c8c"></div>
<svg style="left:250.4px;top:1054.5px" width="15.6" height="14.3"><use href="#b_tag" width="15.6" height="14.3"/></svg>
<div class="t" style="left:161.4px;top:1073.3px;font-size:7.6px;color:#dadada">★</div>
<div class="t" style="left:168.1px;top:1073.3px;font-size:7.6px;color:#dadada">★</div>
<div class="t" style="left:174.8px;top:1073.3px;font-size:7.6px;color:#dadada">★</div>
<div class="t" style="left:181.5px;top:1073.3px;font-size:7.6px;color:#dadada">★</div>
<div class="t" style="left:188.2px;top:1073.3px;font-size:7.6px;color:#dadada">★</div>
<div class="a" style="left:280px;top:954px;width:131px;height:131px;background:linear-gradient(rgba(150,150,150,.55),rgba(120,120,120,0) 6px),linear-gradient(90deg,#525252,#6b6b6b 18%,#727272 50%,#6b6b6b 82%,#525252)"></div>
<div class="a" style="left:280px;top:954px;width:1px;height:131px;background:#7c7c7c"></div>
<div class="a" style="left:293px;top:965px;width:105px;height:105px;background:#f2f2f2;box-shadow:1px 1px 3px rgba(0,0,0,.5)"></div>
<svg style="left:294px;top:966px" width="103" height="103"><use href="#p3" width="103" height="103"/></svg>
<div class="a" style="left:285px;top:958px;width:1px;height:15px;background:#e8e8e8"></div><div class="a" style="left:286px;top:958px;width:9px;height:7.5px;background:#fafafa;box-shadow:0 1px 1px rgba(0,0,0,.4)"></div>
<div class="a" style="left:382.2px;top:969.5px;width:11px;height:11px;border-radius:6px;background:#8c8c8c;border:1.2px solid #2c2c2c"></div>
<svg style="left:367.1px;top:1054.5px" width="15.6" height="14.3"><use href="#b_tag" width="15.6" height="14.3"/></svg>
<svg style="left:382.7px;top:1054.5px" width="14.3" height="14.3"><use href="#b_kw" width="14.3" height="14.3"/></svg>
<div class="a" style="left:411px;top:954px;width:131px;height:131px;background:linear-gradient(rgba(150,150,150,.55),rgba(120,120,120,0) 6px),linear-gradient(90deg,#525252,#6b6b6b 18%,#727272 50%,#6b6b6b 82%,#525252)"></div>
<div class="a" style="left:411px;top:954px;width:1px;height:131px;background:#7c7c7c"></div>
<div class="a" style="left:424px;top:965px;width:105px;height:105px;background:#f2f2f2;box-shadow:1px 1px 3px rgba(0,0,0,.5)"></div>
<svg style="left:425px;top:966px" width="103" height="103"><use href="#p4" width="103" height="103"/></svg>
<div class="a" style="left:416px;top:958px;width:1px;height:15px;background:#e8e8e8"></div><div class="a" style="left:417px;top:958px;width:9px;height:7.5px;background:#fafafa;box-shadow:0 1px 1px rgba(0,0,0,.4)"></div>
<div class="a" style="left:513.2px;top:969.5px;width:11px;height:11px;border-radius:6px;background:#8c8c8c;border:1.2px solid #2c2c2c"></div>
<svg style="left:483.8px;top:1054.5px" width="15.6" height="14.3"><use href="#b_tag" width="15.6" height="14.3"/></svg>
<svg style="left:499.4px;top:1054.5px" width="14.3" height="14.3"><use href="#b_kw" width="14.3" height="14.3"/></svg>
<svg style="left:513.7px;top:1054.5px" width="14.3" height="14.3"><use href="#b_coll" width="14.3" height="14.3"/></svg>
<div class="a" style="left:542px;top:954px;width:131px;height:131px;background:linear-gradient(rgba(150,150,150,.55),rgba(120,120,120,0) 6px),linear-gradient(90deg,#525252,#6b6b6b 18%,#727272 50%,#717171)"></div>
<div class="a" style="left:542px;top:954px;width:1px;height:131px;background:#7c7c7c"></div>
<div class="a" style="left:569.5px;top:962px;width:75.5px;height:112px;background:#f2f2f2;box-shadow:1px 1px 3px rgba(0,0,0,.5)"></div>
<svg style="left:570.5px;top:963px" width="73.5" height="110"><use href="#p5" width="73.5" height="110"/></svg>
<div class="a" style="left:547px;top:958px;width:1px;height:15px;background:#e8e8e8"></div><div class="a" style="left:548px;top:958px;width:9px;height:7.5px;background:#fafafa;box-shadow:0 1px 1px rgba(0,0,0,.4)"></div>
<div class="a" style="left:629.2px;top:966.5px;width:11px;height:11px;border-radius:6px;background:#8c8c8c;border:1.2px solid #2c2c2c"></div>
<svg style="left:585.5px;top:1058.5px" width="15.6" height="14.3"><use href="#b_tag" width="15.6" height="14.3"/></svg>
<svg style="left:601.1px;top:1058.5px" width="14.3" height="14.3"><use href="#b_kw" width="14.3" height="14.3"/></svg>
<svg style="left:615.4px;top:1058.5px" width="14.3" height="14.3"><use href="#b_coll" width="14.3" height="14.3"/></svg>
<svg style="left:629.7px;top:1058.5px" width="14.3" height="14.3"><use href="#b_dev" width="14.3" height="14.3"/></svg>
<div class="t" style="left:568.9px;top:1077.3px;font-size:7.6px;color:#dadada">★</div>
<div class="t" style="left:575.6px;top:1077.3px;font-size:7.6px;color:#dadada">★</div>
<div class="t" style="left:582.3px;top:1077.3px;font-size:7.6px;color:#dadada">★</div>
<div class="a" style="left:673px;top:954px;width:1px;height:131px;background:#1a1a1a"></div>
</body>
</html>
